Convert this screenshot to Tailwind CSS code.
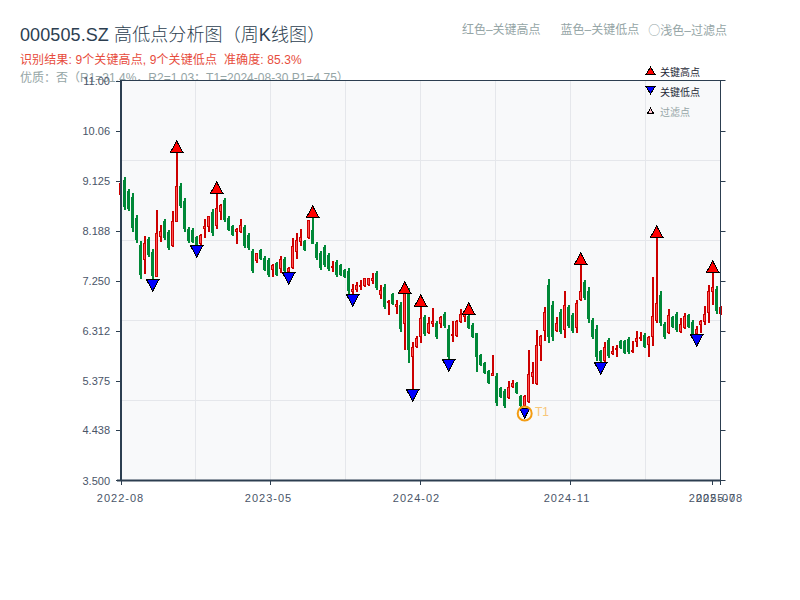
<!DOCTYPE html>
<html lang="zh">
<head>
    <meta charset="UTF-8">
    <title>000505.SZ 高低点分析图</title>
    <script src="https://cdn.jsdelivr.net/npm/@tailwindcss/browser@4"></script>
</head>
<body class="bg-white font-['Liberation_Sans','Noto_Sans_CJK_SC',sans-serif]">
<div class="relative w-[800px] h-[600px] overflow-hidden">

    <header class="px-5 pt-[23px]">
        <div class="flex justify-between items-start pr-[53px]">
            <h1 class="text-[18px] leading-[24px] font-light tracking-[0.1px] text-[#2c3e50]">000505.SZ 高低点分析图（周K线图）</h1>
            <div class="flex text-[12px] leading-[14px] text-[#95a5a6]">
                <span>红色–关键高点</span>
                <span class="ml-5">蓝色–关键低点</span>
                <span class="ml-[9px]"><span class="font-['Noto_Sans_CJK_SC',sans-serif]">○</span>浅色–过滤点</span>
            </div>
        </div>
        <p class="mt-[4px] text-[12px] leading-[18px] tracking-[0.12px] text-[#e74c3c] whitespace-pre">识别结果: 9个关键高点, 9个关键低点  准确度: 85.3%</p>
        <p class="text-[12px] leading-[18px] text-[#95a5a6]">优质：否（R1=31.4%，R2=1.03；T1=2024-08-30 P1=4.75）</p>
    </header>

    <svg class="absolute inset-0" width="800" height="600" viewBox="0 0 800 600">
        <!-- plot -->
        <rect x="121" y="81" width="600" height="400" fill="#f8f9fa"/>
        <g stroke="#e5e7eb" stroke-width="1">
            <path d="M121 160.5H720M121 240.5H720M121 320.5H720M121 400.5H720"/>
            <path d="M195.5 81V480M270.5 81V480M345.5 81V480M420.5 81V480M495.5 81V480M570.5 81V480M645.5 81V480"/>
        </g>
        <g id="bars" shape-rendering="crispEdges"></g>

        <!-- axes -->
        <g stroke="#2c3e50" fill="none">
            <path d="M121 80.5H725.5M720.5 81V485" stroke-width="1"/>
            <path d="M121 80V481M117 480.5H721" stroke-width="2"/>
            <path d="M116 81.5H121M116 131.5H121M116 181.5H121M116 231.5H121M116 281.5H121M116 331.5H121M116 381.5H121M116 430.5H121M116 480.5H121"/>
            <path d="M721 131.5H725.5M721 181.5H725.5M721 231.5H725.5M721 281.5H725.5M721 331.5H725.5M721 381.5H725.5M721 430.5H725.5M721 480.5H725.5"/>
            <path d="M121.5 481V485M270.5 481V485M420.5 481V485M570.5 481V485M712.5 481V485"/>
        </g>
        <g class="text-[11px] fill-[#4a5568]" text-anchor="end">
            <text x="110" y="85">11.00</text>
            <text x="110" y="135">10.06</text>
            <text x="110" y="185">9.125</text>
            <text x="110" y="235">8.188</text>
            <text x="110" y="285">7.250</text>
            <text x="110" y="335">6.312</text>
            <text x="110" y="385">5.375</text>
            <text x="110" y="434">4.438</text>
            <text x="110" y="485">3.500</text>
        </g>
        <g class="text-[11px] tracking-[1px] fill-[#4a5568]" text-anchor="middle">
            <text x="120.5" y="502">2022-08</text>
            <text x="268.5" y="502">2023-05</text>
            <text x="416.5" y="502">2024-02</text>
            <text x="567" y="502">2024-11</text>
            <text x="712.5" y="502">2025-07</text>
            <text x="719.5" y="502">2025-08</text>
        </g>

        <!-- key highs -->
        <g fill="#ff0000" stroke="#000000" stroke-width="1" shape-rendering="crispEdges">
            <path d="M176.7 141L183 152.5H170.4Z"/>
            <path d="M216.7 182L223 193.5H210.4Z"/>
            <path d="M312.7 206L319 217.5H306.4Z"/>
            <path d="M404.7 282L411 293.5H398.4Z"/>
            <path d="M420.7 295L427 306.5H414.4Z"/>
            <path d="M468.7 303L475 314.5H462.4Z"/>
            <path d="M580.7 253L587 264.5H574.4Z"/>
            <path d="M656.7 226L663 237.5H650.4Z"/>
            <path d="M712.7 261L719 272.5H706.4Z"/>
        </g>
        <!-- key lows -->
        <g fill="#0000ff" stroke="#000000" stroke-width="1" shape-rendering="crispEdges">
            <path d="M146.4 279.5H159L152.7 291Z"/>
            <path d="M190.4 245.5H203L196.7 257Z"/>
            <path d="M282.4 272.5H295L288.7 284Z"/>
            <path d="M346.4 294.5H359L352.7 306Z"/>
            <path d="M406.4 389.5H419L412.7 401Z"/>
            <path d="M442.4 359.5H455L448.7 371Z"/>
            <path d="M594.4 362.5H607L600.7 374Z"/>
            <path d="M690.4 334.5H703L696.7 346Z"/>
            <path d="M519.7 408.5H529.7L524.7 418Z"/>
        </g>
        <circle cx="524.7" cy="413.5" r="7" fill="none" stroke="#f39c12" stroke-width="2"/>
        <text x="535" y="416" class="text-[12px] fill-[#f7c679]">T1</text>

        <!-- legend -->
        <g shape-rendering="crispEdges" stroke="#000000">
            <path d="M650.5 67L655 74.5H646Z" fill="#ff0000"/>
            <path d="M646 86.5H655L650.5 94Z" fill="#0000ff"/>
            <path d="M650.5 108L653.5 113.5H647.5Z" fill="#ffc0cb"/>
        </g>
        <text x="660" y="76" class="text-[10px] fill-[#1f2937]">关键高点</text>
        <text x="660" y="96" class="text-[10px] fill-[#1f2937]">关键低点</text>
        <text x="660" y="116" class="text-[10px] fill-[#95a5a6]">过滤点</text>
    </svg>
</div>

<script>
// [x, top, bottom, colour, bodyTop, bodyBottom] in crop coordinates, 3x
var segments = [
    [110, 130, [[32,152,197,'r'],[44,141,240,'g'],[56,177,243,'g'],[68,190,305,'g'],[80,255,338,'g'],[92,333,447,'g'],[104,318,432,'r',339,390],[116,321,380,'g'],[128,357,447,'g'],[140,240,440,'r',309,440],[152,285,335,'r',303,320],[164,267,330,'g'],[176,300,360,'g'],[188,243,350,'r',273,348],[200,68,275,'r',168,275],[212,159,235,'g'],[224,205,305,'g'],[236,291,338,'g'],[248,294,340,'g'],[260,318,350,'g'],[272,312,345,'r'],[284,267,325,'r',288,296],[296,258,306,'r',258,292],[308,237,317,'g'],[320,190,298,'r',235,288],[332,222,270,'r',225,245],[344,204,275,'g'],[356,258,303,'g'],[368,285,317,'g'],[380,294,342,'r',296,305],[392,267,308,'r',285,306],[404,285,354,'g'],[416,309,360,'g'],[428,357,428,'g'],[440,369,399,'r',370,392],[452,357,390,'g'],[464,378,423,'g'],[476,384,440,'g']]],
    [270, 190, [[8,222,261,'r',224,240],[20,216,258,'g'],[32,198,249,'r',207,237],[44,201,246,'g'],[56,231,246,'r'],[68,144,237,'r',168,235],[80,129,207,'r',150,186],[92,117,168,'r',141,156],[104,150,183,'g'],[116,90,147,'r',90,145],[128,84,162,'g',120,162],[140,156,210,'g'],[152,183,240,'g'],[164,165,231,'g'],[176,189,243,'g'],[188,213,246,'r',227,234],[200,210,261,'g'],[212,222,258,'g'],[224,237,264,'g'],[236,234,312,'g'],[248,282,312,'r',297,305],[260,276,306,'r',285,300],[272,270,300,'r',285,292],[284,264,291,'r',264,289],[296,264,288,'r',265,286],[308,249,282,'r',264,274],[320,243,300,'g'],[332,285,327,'r',300,315],[344,282,357,'g'],[356,330,375,'r',333,340],[368,309,345,'g'],[380,330,372,'r',342,350],[392,336,426,'g'],[404,309,480,'r',309,402],[416,294,519,'g',309,480],[428,456,600,'r',471,500],[440,438,474,'r',444,472],[452,345,459,'r',384,442],[464,375,438,'g'],[476,381,432,'r',399,429]]],
    [430, 240, [[8,204,261,'r',243,252],[20,243,297,'g'],[32,228,264,'r',231,252],[44,216,264,'g'],[56,255,360,'g'],[68,243,306,'r',282,288],[80,240,291,'r',243,288],[92,207,249,'r',222,247],[104,213,246,'r',222,231],[116,222,267,'g'],[128,249,294,'g'],[140,279,396,'g',279,351],[152,342,378,'g'],[164,366,402,'g'],[176,390,432,'g'],[188,345,408,'r',400,407],[200,399,498,'g'],[212,441,474,'g'],[224,447,504,'g'],[236,423,477,'r',442,474],[248,420,444,'r',430,442],[260,426,462,'g'],[272,465,500,'g'],[284,465,500,'r'],[296,330,489,'r',402,487],[308,366,432,'r',396,410],[320,270,435,'r',315,432],[332,285,363,'r',288,318],[344,201,303,'r',216,272],[356,117,309,'g'],[368,183,303,'g'],[380,231,276,'r',249,274],[392,207,282,'g'],[404,153,294,'r',195,270],[416,195,264,'g'],[428,219,279,'g'],[440,180,279,'r',189,264],[452,72,183,'r',153,180],[464,120,180,'g'],[476,141,249,'g']]],
    [580, 220, [[38,294,357,'g'],[50,315,423,'g'],[62,390,426,'g'],[74,366,426,'r',381,423],[86,354,414,'g'],[98,378,405,'r',393,403],[110,375,411,'r',384,390],[122,360,387,'g'],[134,360,402,'g'],[146,351,402,'g'],[158,363,399,'r',390,397],[170,333,381,'r',354,366],[182,336,363,'r',351,358],[194,339,384,'g'],[206,348,411,'r',351,375],[218,171,378,'r',288,350],[230,50,309,'r',250,303],[242,213,318,'g'],[254,306,357,'g'],[266,267,342,'r',285,340],[278,288,324,'g'],[290,276,336,'g'],[302,294,339,'r',312,336],[314,279,327,'r',288,325],[326,282,324,'g'],[338,300,345,'g'],[350,318,345,'r',327,342],[362,300,339,'r',303,315],[374,258,315,'r',282,306],[386,195,309,'r',213,280],[398,155,255,'r',201,216],[410,198,282,'g'],[422,258,285,'r',261,282]]]
];

var out = '';
function rect(x, y, w, h, fill) {
    out += '<rect x="' + x + '" y="' + y + '" width="' + w + '" height="' + h + '" fill="' + fill + '"/>';
}
segments.forEach(function (seg) {
    seg[2].forEach(function (b) {
        var x = Math.floor(seg[0] + b[0] / 3);
        var top = Math.round(seg[1] + b[1] / 3), bot = Math.round(seg[1] + b[2] / 3);
        var len = bot - top;
        var red = b[3] == 'r';
        var bt = b[4] !== undefined ? Math.round(seg[1] + b[4] / 3) : Math.round(top + len * 0.1);
        var bb = b[5] !== undefined ? Math.round(seg[1] + b[5] / 3) : Math.round(bot - len * 0.1);
        rect(x, top, 2, len, red ? '#cc0000' : '#008837');
        rect(x - 1, bt, 3, bb - bt, red ? '#cc0000' : '#008837');
        if (red && bb - bt > 2) rect(x, bt + 1, 1, bb - bt - 2, '#ff5050');
    });
});
document.getElementById('bars').innerHTML = out;
</script>
</body>
</html>
